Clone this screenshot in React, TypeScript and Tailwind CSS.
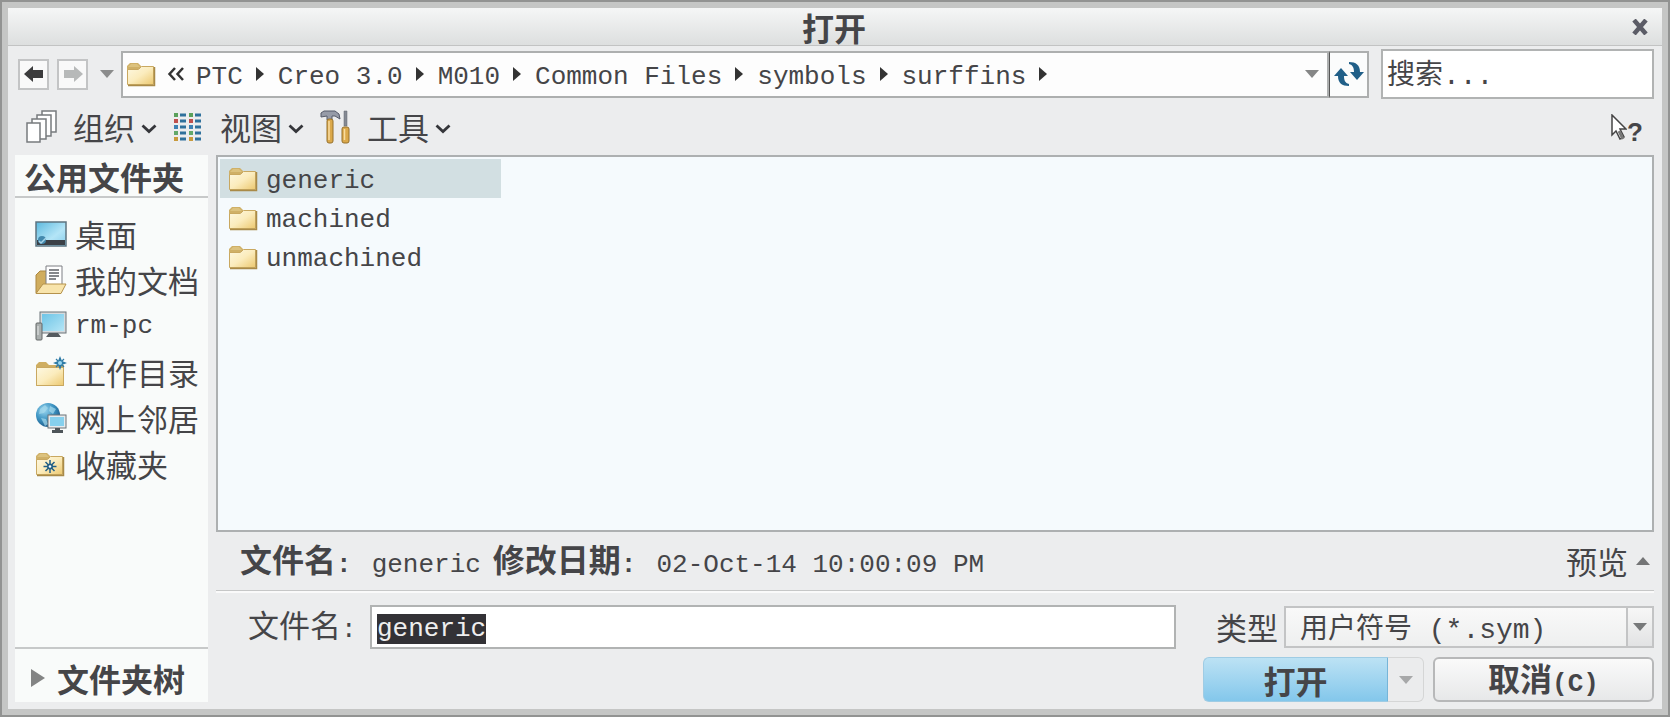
import { useEffect, useRef, type ReactNode } from "react";

const Folder = ({ children }: { children?: ReactNode }) => (
  <svg width="30" height="28" viewBox="0 0 30 28" className="shrink-0" aria-hidden="true">
    <defs>
      <linearGradient id="folderFace" x1="0" y1="0" x2="1" y2="1">
        <stop offset="0" stopColor="#fdf8e2" />
        <stop offset="0.5" stopColor="#fbecbd" />
        <stop offset="1" stopColor="#ecc86f" />
      </linearGradient>
    </defs>
    <path d="M1 10V6l3-3h8l3 3v3z" fill="#cfb067" />
    <path d="M2 7l3-3h6l3 3z" fill="#dcc27e" />
    <path d="M1.500 9.500h11l3-3h12v18h-26z" fill="url(#folderFace)" stroke="#c9a860" />
    <path d="M2 25.500h26.500V7" fill="none" stroke="#a98a48" strokeWidth="1.500" />
    {children}
  </svg>
);

const Monitor = () => (
  <svg width="32" height="30" viewBox="0 0 32 30" aria-hidden="true">
    <defs>
      <linearGradient id="screen" x1="0" y1="0" x2="1" y2="1">
        <stop offset="0" stopColor="#6ec4e6" />
        <stop offset="1" stopColor="#b5e6f6" />
      </linearGradient>
    </defs>
    <rect x="5" y="1" width="26" height="21" fill="#d5dadd" stroke="#6d7478" />
    <rect x="7" y="3" width="22" height="17" fill="url(#screen)" />
    <path d="M14 22h9l3 4H11z" fill="#555b5f" />
    <rect x="1" y="12" width="6" height="17" rx="1" fill="#a9aead" stroke="#636766" />
    <path d="M3 15v9" stroke="#e8eaea" />
  </svg>
);

const Desktop = () => (
  <svg width="32" height="28" viewBox="0 0 32 28" aria-hidden="true">
    <defs>
      <linearGradient id="desk" x1="0" y1="0" x2="1" y2="1">
        <stop offset="0" stopColor="#5cb9de" />
        <stop offset="0.600" stopColor="#b4e5f7" />
        <stop offset="1" stopColor="#86cdea" />
      </linearGradient>
    </defs>
    <rect x="1" y="2" width="30" height="24" fill="url(#desk)" stroke="#5d7480" strokeWidth="1.500" />
    <rect x="2" y="20" width="28" height="5" fill="#3b4046" />
    <circle cx="7" cy="20" r="4" fill="#4389ad" />
    <path d="M4 21l2 2 5-5" fill="none" stroke="#a5d3e8" strokeWidth="1.500" />
  </svg>
);

const Documents = () => (
  <svg width="32" height="30" viewBox="0 0 32 30" aria-hidden="true">
    <path d="M1 28V10l4-4h9v22z" fill="#d0ad5e" stroke="#ab8740" />
    <path d="M11 1h16v19H11z" fill="#fff" stroke="#7d7f83" />
    <path d="M14 5h10M14 8h10M14 11h10M14 14h7" stroke="#5d6066" strokeWidth="1.400" />
    <path d="M1 28.500L8 19h23l-5 9.500z" fill="#f8e4ab" stroke="#b5924b" />
  </svg>
);

const WorkingDir = () => (
  <svg width="32" height="32" viewBox="0 0 32 32" aria-hidden="true">
    <path d="M1 30V9l3-3h7l3 3h15v21z" fill="#cfae62" />
    <path d="M1.500 11.500h27v18h-27z" fill="url(#folderFace)" stroke="#c9a860" />
    <path d="M25 0l2 5 5 2-5 2-2 5-2-5-5-2 5-2z" fill="#2e7ba6" />
    <path d="M21 3l8 8M29 3l-8 8" stroke="#2e7ba6" strokeWidth="1.200" />
    <circle cx="25" cy="7" r="2" fill="#9bd8f2" />
  </svg>
);

const Network = () => (
  <svg width="32" height="32" viewBox="0 0 32 32" aria-hidden="true">
    <defs>
      <radialGradient id="globe" cx="0.350" cy="0.300" r="0.800">
        <stop offset="0" stopColor="#9bd6ef" />
        <stop offset="0.500" stopColor="#3d94c2" />
        <stop offset="1" stopColor="#174f7d" />
      </radialGradient>
    </defs>
    <circle cx="13" cy="13" r="12" fill="url(#globe)" />
    <path d="M5 7l5-4 3 3-4 5-5 1zM15 4l6 3-3 5-4-3zM6 16l5 1 2 5-3 2z" fill="#a6daed" opacity="0.700" />
    <rect x="13" y="13" width="18" height="13" fill="#e6eaec" stroke="#6c7377" />
    <rect x="15" y="15" width="14" height="9" fill="#86d0ed" />
    <path d="M20 26h5v2h3v3H17v-3h3z" fill="#4e5559" />
  </svg>
);

const Favorites = () => (
  <Folder>
    <g stroke="#225f86" strokeWidth="1.500">
      <path d="M15 10v13M8.500 16.500h13M10.500 12l9 9M19.500 12l-9 9" />
    </g>
    <circle cx="15" cy="16.500" r="3" fill="#225f86" />
    <circle cx="15" cy="16.500" r="1.300" fill="#fff" />
  </Folder>
);

const Stack = () => (
  <svg width="32" height="34" viewBox="0 0 32 34" aria-hidden="true">
    <g fill="#fff" stroke="#777b7e" strokeWidth="1.500">
      <path d="M16 1h14v21H16z" />
      <path d="M11 5h14v21H11z" />
      <path d="M6 9h14v20H6z" />
      <path d="M1 13h13v19H1z" />
    </g>
  </svg>
);

const dotColors = ["#5aa05a", "#c0504d", "#3e82b4", "#62a86a", "#c89a3c"];

const ListView = () => (
  <svg width="30" height="30" viewBox="0 0 30 30" aria-hidden="true">
    {dotColors.map((color, i) => (
      <g key={color}>
        <path d={`M1 ${3 + i * 6}h4M16 ${3 + i * 6}h4`} stroke={color} strokeWidth="4" />
        <path d={`M7 ${3 + i * 6}h6M22 ${3 + i * 6}h6`} stroke="#2f719c" strokeWidth="3" />
      </g>
    ))}
  </svg>
);

const Tools = () => (
  <svg width="30" height="34" viewBox="0 0 30 34" aria-hidden="true">
    <path d="M1 7V3l3-2h11l4 3 1 5-5-3h-3v4H7V6z" fill="#969ba8" stroke="#555a6a" />
    <rect x="7" y="9" width="6" height="24" rx="2" fill="#dba94b" stroke="#96702a" />
    <path d="M9 11v19" stroke="#f8dda0" strokeWidth="1.500" />
    <path d="M24 1h3v15h-3z" fill="#858a94" stroke="#60646e" strokeWidth="0.500" />
    <rect x="22" y="17" width="7" height="16" rx="2" fill="#dba94b" stroke="#96702a" />
    <path d="M24.500 19v11" stroke="#f8dda0" strokeWidth="1.500" />
  </svg>
);

const Chevron = () => (
  <svg width="16" height="10" viewBox="0 0 16 10" className="mt-1" aria-hidden="true">
    <path d="M1.500 1.500L8 7.500l6.500-6" fill="none" stroke="#35363a" strokeWidth="2.800" />
  </svg>
);

const Arrow = ({ forward }: { forward?: boolean }) => (
  <svg width="20" height="18" viewBox="0 0 20 18" aria-hidden="true">
    {forward ? (
      <path d="M20 9l-9-8v4H1v8h10v4z" fill="#b7b9b9" />
    ) : (
      <path d="M0 9l9-8v4h10v8H9v4z" fill="#3b3b3c" />
    )}
  </svg>
);

const Triangle = ({ className = "" }: { className?: string }) => (
  <svg width="14" height="8" viewBox="0 0 14 8" className={className} aria-hidden="true">
    <path d="M0 0h14L7 8z" fill="currentColor" />
  </svg>
);

const Refresh = () => (
  <svg width="30" height="26" viewBox="0 0 30 26" aria-hidden="true">
    <path d="M0 15L7 7l7 8h-4c0 4 1 7 5 8v2C8 25 4 22 4 15z" fill="#205f88" />
    <path d="M30 11l-7 8-7-8h4c0-4-1-7-5-8V1c7 0 11 3 11 10z" fill="#205f88" />
  </svg>
);

const Latin = ({ children }: { children: ReactNode }) => (
  <span className="font-['Liberation_Mono',monospace] text-[26px]">{children}</span>
);

const crumbs = ["PTC", "Creo 3.0", "M010", "Common Files", "symbols", "surffins"];

const menus = [
  { label: "组织", icon: <Stack /> },
  { label: "视图", icon: <ListView /> },
  { label: "工具", icon: <Tools /> },
];

const places = [
  { label: "桌面", icon: <Desktop /> },
  { label: "我的文档", icon: <Documents /> },
  { label: <Latin>rm-pc</Latin>, icon: <Monitor /> },
  { label: "工作目录", icon: <WorkingDir /> },
  { label: "网上邻居", icon: <Network /> },
  { label: "收藏夹", icon: <Favorites /> },
];

const files = ["generic", "machined", "unmachined"];

const App = () => {
  const nameRef = useRef<HTMLInputElement>(null);

  useEffect(() => {
    nameRef.current?.focus();
    nameRef.current?.select();
  }, []);

  return (
    <div className="flex min-h-screen border-2 border-[#929392] bg-[#c5c6c5] p-[6px] font-['Noto_Sans_CJK_SC',sans-serif] text-[31px] leading-9 text-[#454548]">
      <div className="flex min-w-0 flex-1 flex-col bg-[#ecedee]">
        <header className="flex h-[38px] items-center border-b border-[#c2c3c3] bg-gradient-to-b from-[#f5f6f6] to-[#dddfdf] pr-[14px] pl-7">
          <h1 className="flex-1 text-center text-[32px] font-bold">打开</h1>
          <button aria-label="关闭">
            <svg width="16" height="16" viewBox="0 0 16 16" aria-hidden="true">
              <path d="M2 1l12 14M14 1L2 15" stroke="#5b5c66" strokeWidth="4.500" />
            </svg>
          </button>
        </header>

        <div className="mt-[3px] flex items-center pr-2 pl-[10px]">
          <button aria-label="后退" className="flex h-[31px] w-[31px] items-center justify-center border-2 border-[#c3c4c5] bg-[#f9f9f9]">
            <Arrow />
          </button>
          <button aria-label="前进" className="ml-2 flex h-[31px] w-[31px] items-center justify-center border-2 border-[#c3c4c5] bg-[#f9f9f9]">
            <Arrow forward />
          </button>
          <button aria-label="历史记录" className="ml-3 text-[#8b8c8c]">
            <Triangle />
          </button>

          <nav className="ml-[7px] flex h-[47px] min-w-0 flex-1 items-center border-2 border-[#adafaf] bg-[#fdfdfd] pl-[3px] font-['Liberation_Mono',monospace] text-[26px]">
            <Folder />
            <svg width="18" height="14" viewBox="0 0 18 14" className="mx-[11px]" aria-hidden="true">
              <path d="M8 1L2.500 7 8 13M16 1l-5.500 6L16 13" fill="none" stroke="#333" strokeWidth="2.500" />
            </svg>
            {crumbs.map((crumb) => (
              <span key={crumb} className="flex items-center whitespace-nowrap">
                <a href="#" className="pt-[5px]">
                  {crumb}
                </a>
                <svg width="8" height="14" viewBox="0 0 8 14" className="mr-[14px] ml-[13px]" aria-hidden="true">
                  <path d="M0 0l8 7-8 7z" fill="#333" />
                </svg>
              </span>
            ))}
            <button aria-label="路径列表" className="mr-2 ml-auto text-[#858686]">
              <Triangle />
            </button>
          </nav>
          <button aria-label="刷新" className="flex h-[47px] w-10 items-center justify-center border-2 border-l border-[#adafaf] border-l-[#555] bg-[#fbfcfc]">
            <Refresh />
          </button>
          <input
            type="search"
            aria-label="搜索"
            placeholder="搜索..."
            className="ml-3 h-[50px] w-[273px] border-2 border-[#b1b3b3] bg-white px-1 pt-[5px] font-['Liberation_Mono','Noto_Sans_CJK_SC',monospace] text-[28px] placeholder:text-[#454548]"
          />
        </div>

        <div className="flex h-14 items-center pr-[19px] pl-[18px]">
          {menus.map(({ label, icon }) => (
            <button key={label} className="mr-4 flex items-center">
              <span className="w-[47px]">{icon}</span>
              {label}
              <span className="ml-[6px]">
                <Chevron />
              </span>
            </button>
          ))}
          <button aria-label="帮助" className="ml-auto flex items-end pt-1 font-['Liberation_Sans',sans-serif] text-[26px] leading-6 font-bold">
            <svg width="16" height="30" viewBox="0 0 16 30" aria-hidden="true">
              <path d="M1 1v20l4-4 4 8 4-2-4-8h6z" fill="#fff" stroke="#444" strokeWidth="1.500" />
              <path d="M8 17l4 8" stroke="#777" strokeWidth="3" />
            </svg>
            ?
          </button>
        </div>

        <main className="flex flex-1 gap-2 pr-2 pb-[7px] pl-[7px]">
          <aside className="flex w-[193px] flex-col bg-[#f9fbfa]">
            <h2 className="h-[43px] border-b-2 border-[#c7c9c9] pt-[3px] pl-[9px] text-[32px] font-bold">公用文件夹</h2>
            <ul className="mt-[13px] flex-1 pl-5">
              {places.map(({ label, icon }, i) => (
                <li key={i}>
                  <a href="#" className="flex h-[46px] items-center whitespace-nowrap">
                    <span className="w-10">{icon}</span>
                    {label}
                  </a>
                </li>
              ))}
            </ul>
            <button className="flex h-[55px] items-center gap-3 border-t-2 border-[#c7c9c9] pt-1 pl-4 text-[32px] font-bold whitespace-nowrap">
              <svg width="14" height="18" viewBox="0 0 14 18" aria-hidden="true">
                <path d="M0 0l14 9-14 9z" fill="#838484" />
              </svg>
              文件夹树
            </button>
          </aside>

          <section className="flex min-w-0 flex-1 flex-col">
            <ul className="flex-1 border-2 border-[#adb0b1] bg-[#f5fafd] p-[2px] font-['Liberation_Mono',monospace] text-[26px]">
              {files.map((file, i) => (
                <li key={file}>
                  <a
                    href="#"
                    className={
                      i === 0
                        ? "flex h-[39px] w-[281px] items-center gap-2 bg-[#d2dfe2] pl-2"
                        : "flex h-[39px] w-[281px] items-center gap-2 pl-2"
                    }
                  >
                    <Folder />
                    <span className="pt-1">{file}</span>
                  </a>
                </li>
              ))}
            </ul>

            <div className="flex h-[59px] items-center border-b border-[#c6c7c7] pr-1 pl-6 shadow-[0_2px_0_#fafafa]">
              <dl className="flex flex-1 items-baseline whitespace-nowrap">
                <dt className="text-[32px] font-bold">
                  文件名<Latin>:</Latin>
                </dt>
                <dd className="mr-3 ml-5">
                  <Latin>generic</Latin>
                </dd>
                <dt className="text-[32px] font-bold">
                  修改日期<Latin>:</Latin>
                </dt>
                <dd className="ml-5">
                  <Latin>02-Oct-14 10:00:09 PM</Latin>
                </dd>
              </dl>
              <button className="flex items-center gap-2">
                预览
                <Triangle className="rotate-180 text-[#747576]" />
              </button>
            </div>

            <form onSubmit={(e) => e.preventDefault()}>
              <div className="mt-[14px] flex items-center">
                <label htmlFor="filename" className="w-[154px] pl-8 whitespace-nowrap">
                  文件名<Latin>:</Latin>
                </label>
                <input
                  id="filename"
                  ref={nameRef}
                  defaultValue="generic"
                  className="h-[44px] min-w-0 flex-1 border-2 border-[#b1b3b3] bg-white px-[5px] pt-1 font-['Liberation_Mono',monospace] text-[26px] outline-none selection:bg-[#333236] selection:text-[#eeeeee]"
                />
                <label htmlFor="filetype" className="mr-[6px] ml-10 whitespace-nowrap">
                  类型
                </label>
                <div className="grid w-[370px] items-center">
                  <select
                    id="filetype"
                    className="col-start-1 row-start-1 h-[42px] w-full appearance-none border-2 border-[#c3c4c5] bg-gradient-to-b from-[#f9f9f9] to-[#eeefef] pt-[5px] pl-[14px] font-['Liberation_Mono','Noto_Sans_CJK_SC',monospace] text-[28px]"
                  >
                    <option>用户符号 (*.sym)</option>
                  </select>
                  <span className="pointer-events-none col-start-1 row-start-1 flex h-[42px] w-7 items-center justify-center justify-self-end border-2 border-[#c3c4c5] bg-gradient-to-b from-[#f7f7f7] to-[#e2e3e4] text-[#77797a]">
                    <Triangle />
                  </span>
                </div>
              </div>

              <div className="mt-2 flex h-[45px] justify-end text-[32px] font-bold">
                <button type="submit" className="w-[185px] rounded-l-md border border-[#9fcce4] border-r-[#76b5d8] bg-gradient-to-b from-[#bce2f4] to-[#83c7eb]">
                  打开
                </button>
                <button type="button" aria-label="打开选项" className="flex w-9 items-center justify-center rounded-r-md border border-l-0 border-[#d5d6d6] bg-[#ebeced] text-[#a7a8a9]">
                  <Triangle />
                </button>
                <button type="button" className="ml-[9px] w-[221px] rounded-md border-2 border-[#b7b8b9] bg-gradient-to-b from-[#fafafa] to-[#e7e8e9]">
                  取消<Latin>(C)</Latin>
                </button>
              </div>
            </form>
          </section>
        </main>
      </div>
    </div>
  );
};

export default App;
